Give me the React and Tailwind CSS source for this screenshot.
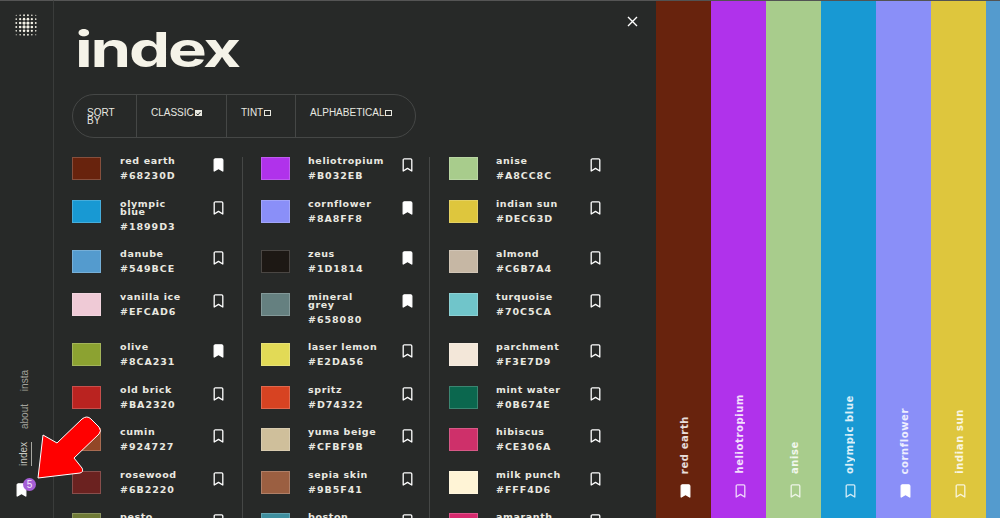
const ROWS = [
  [['red earth', '#68230D', true], ['heliotropium', '#B032EB'], ['anise', '#A8CC8C']],
  [['olympic\nblue', '#1899D3'], ['cornflower', '#8A8FF8', true], ['indian sun', '#DEC63D']],
  [['danube', '#549BCE'], ['zeus', '#1D1814', true], ['almond', '#C6B7A4']],
  [['vanilla ice', '#EFCAD6'], ['mineral\ngrey', '#658080', true], ['turquoise', '#70C5CA']],
  [['olive', '#8CA231', true], ['laser lemon', '#E2DA56'], ['parchment', '#F3E7D9']],
  [['old brick', '#BA2320'], ['spritz', '#D74322'], ['mint water', '#0B674E']],
  [['cumin', '#924727'], ['yuma beige', '#CFBF9B'], ['hibiscus', '#CE306A']],
  [['rosewood', '#6B2220'], ['sepia skin', '#9B5F41'], ['milk punch', '#FFF4D6']],
  [['pesto', '#6F7A36'], ['boston', '#3E8E9E'], ['amaranth', '#D62A6E']],
];

const STRIPS = [
  ['red earth', '#68230D', true],
  ['heliotropium', '#B032EB'],
  ['anise', '#A8CC8C'],
  ['olympic blue', '#1899D3'],
  ['cornflower', '#8A8FF8', true],
  ['indian sun', '#DEC63D'],
  ['danube', '#549BCE'],
];

const SORTS = [
  ['CLASSIC', true, 'w-[90px]'],
  ['TINT', false, 'w-[69px]'],
  ['ALPHABETICAL', false, 'flex-1'],
];

const DOTS = [-2.5, -1.5, -0.5, 0.5, 1.5, 2.5]
  .flatMap((a) => [-2.5, -1.5, -0.5, 0.5, 1.5, 2.5].map((b) => ({ a, b, d: Math.hypot(a, b) })))
  .filter((p) => p.d < 3.6);

const CELL_PADDING = ['w-[170px]', 'w-[187px] pl-[18px] border-l border-[#454746]', 'w-[187px] pl-[19px] border-l border-[#454746]'];

const Mark = ({ filled, className }) => (
  <svg className={className} viewBox="0 0 11 14" fill={filled ? 'currentColor' : 'none'} stroke="currentColor" strokeWidth="1.3" strokeLinejoin="round">
    <path d="M1.2 2Q1.2 .8 2.4 .8H8.6Q9.8 .8 9.8 2V13L5.5 10.4 1.2 13Z" />
  </svg>
);

const Cell = ({ name, hex, saved, index }) => (
  <div className={`flex items-start pb-[18.5px] ${CELL_PADDING[index]}`}>
    <div className="w-[29px] h-[23px] shrink-0 border border-white/20" style={{ backgroundColor: hex }} />
    <div className={`${index === 0 ? 'ml-[19px]' : 'ml-[18px]'} w-[78px] shrink-0 font-['DejaVu_Sans',sans-serif] font-semibold text-[9.5px] text-[#e9e8e0]`}>
      <div className="whitespace-pre-line leading-[8px] tracking-[0.6px]">{name}</div>
      <div className="mt-[6px] leading-[10px] tracking-[0.95px]">{hex}</div>
    </div>
    <Mark filled={saved} className={`${index === 0 ? 'ml-[15px]' : 'ml-[16px]'} mt-px w-[11px] h-[14px] shrink-0 text-white`} />
  </div>
);

export default function App() {
  return (
    <div className="relative flex h-[518px] w-[1000px] overflow-hidden bg-[#272928] font-['Liberation_Sans',sans-serif]">
      <aside className="flex w-[54px] shrink-0 flex-col border-r border-t border-r-[#3a3c3b] border-t-[#555]">
        <svg className="ml-[14px] mt-[12px] h-[24px] w-[24px]" viewBox="0 0 24 24" fill="#f5f3e8">
          {DOTS.map(({ a, b, d }) => (
            <circle key={`${a}_${b}`} cx={12 + a * 3.9} cy={12 + b * 3.9} r={Math.max(0.55, 1.9 - d * 0.38)} />
          ))}
        </svg>
        <div className="mt-auto flex flex-col items-start pl-[20px] pb-[21px] text-[10px] leading-[10px]">
          <span className="[writing-mode:vertical-rl] rotate-180 text-[#a3a39d]">insta</span>
          <span className="mt-[13px] [writing-mode:vertical-rl] rotate-180 text-[#a3a39d]">about</span>
          <div className="mt-[13px] ml-[-1px] flex items-stretch gap-[2px]">
            <span className="[writing-mode:vertical-rl] rotate-180 text-[#c9c9c2]">index</span>
            <div className="w-px bg-[#a8a8a2]" />
          </div>
          <div className="relative mt-[17px] ml-[-4px] h-[14px] w-[11px]">
            <Mark filled className="h-[14px] w-[11px] text-white" />
            <div className="absolute left-[7px] top-[-5px] flex h-[13px] w-[13px] items-center justify-center rounded-full bg-[#a65fd6] text-[10px] leading-none text-[#f4e8fb]">5</div>
          </div>
        </div>
      </aside>

      <main className="relative w-[602px] shrink-0 overflow-hidden border-t border-[#555] pl-[18px]">
        <svg className="absolute left-[573px] top-[15px] h-[11px] w-[11px] text-white" viewBox="0 0 11 11" stroke="currentColor" strokeWidth="1.4">
          <path d="M1 1l9 9M10 1l-9 9" />
        </svg>
        <h1 className="ml-[3px] mt-[22px] h-[53px] origin-left scale-x-[1.345] font-['Inter',sans-serif] text-[48.5px] leading-[53px] font-bold tracking-[-1.6px] text-[#f5f3e8]">index</h1>
        <div className="mt-[18px] flex h-[44px] w-[344px] rounded-full border border-[#454746] text-[10px] leading-[8px] text-[#e8e8e0]">
          <div className="w-[63px] pl-[14px] pt-[14px]">SORT<br />BY</div>
          {SORTS.map(([label, on, width]) => (
            <div key={label} className={`${width} flex items-start border-l border-[#454746] pl-[14px] pt-[13px]`}>
              <span className="leading-[10px]">{label}</span>
              <span className={`ml-px mt-[2px] flex h-[6px] w-[7px] items-center justify-center border border-[#e8e8e0] ${on ? 'bg-[#e8e8e0]' : ''}`}>
                {on && (
                  <svg className="h-[5px] w-[5px]" viewBox="0 0 5 5" fill="none" stroke="#272928" strokeWidth="1">
                    <path d="M.5 2.5l1.4 1.5L4.5 1" />
                  </svg>
                )}
              </span>
            </div>
          ))}
        </div>
        <div className="mt-[19px]">
          {ROWS.map((row, i) => (
            <div key={i} className="flex">
              {row.map(([name, hex, saved], j) => (
                <Cell key={name} name={name} hex={hex} saved={saved} index={j} />
              ))}
            </div>
          ))}
        </div>
      </main>

      <section className="flex flex-1 border-t border-white/20">
        {STRIPS.map(([name, hex, saved]) => (
          <div key={name} className="flex h-full w-[55px] shrink-0 flex-col items-center justify-end pb-[20px] pl-[3px] text-white/80" style={{ backgroundColor: hex }}>
            <span className="[writing-mode:vertical-rl] rotate-180 font-['DejaVu_Sans',sans-serif] text-[10px] leading-[10px] font-semibold tracking-[0.6px] text-white/85">{name}</span>
            <Mark filled={saved} className={`mt-[10px] h-[14px] w-[11px] ${saved ? 'text-white' : ''}`} />
          </div>
        ))}
      </section>

      <svg className="absolute left-[30px] top-[410px] h-[75px] w-[80px]" viewBox="0 0 80 75">
        <path d="M8 68L13 25 27 33 52 9Q57 5 61 9L69 17Q72 21 69 24L44 48 52 58Q54 62 50 63Z" fill="#ff0000" stroke="#ffffff" strokeWidth="1" strokeLinejoin="round" />
      </svg>
    </div>
  );
}
